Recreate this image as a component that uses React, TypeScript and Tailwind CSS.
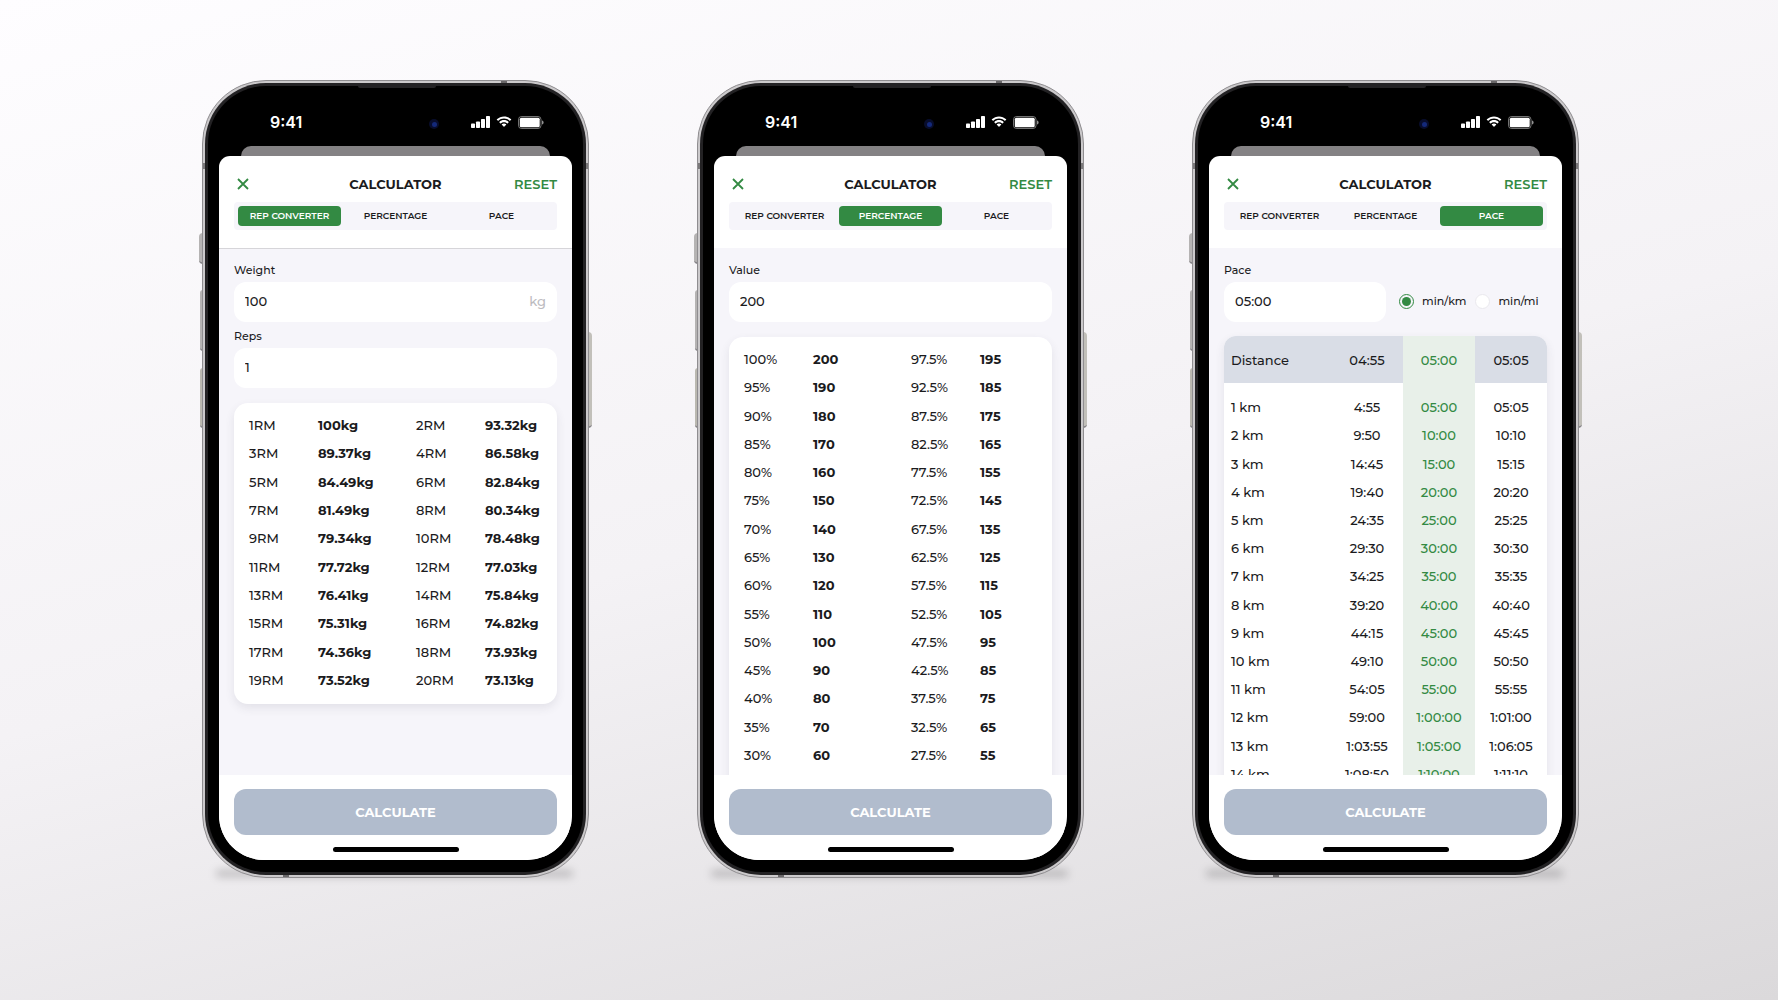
import { useId } from "react"
import type { ReactNode } from "react"

const repMaxes = [
  ["1RM", "100kg", "2RM", "93.32kg"],
  ["3RM", "89.37kg", "4RM", "86.58kg"],
  ["5RM", "84.49kg", "6RM", "82.84kg"],
  ["7RM", "81.49kg", "8RM", "80.34kg"],
  ["9RM", "79.34kg", "10RM", "78.48kg"],
  ["11RM", "77.72kg", "12RM", "77.03kg"],
  ["13RM", "76.41kg", "14RM", "75.84kg"],
  ["15RM", "75.31kg", "16RM", "74.82kg"],
  ["17RM", "74.36kg", "18RM", "73.93kg"],
  ["19RM", "73.52kg", "20RM", "73.13kg"],
]

const percentages = Array.from({ length: 15 }, (_, i) => {
  const left = 100 - i * 5
  const right = left - 2.5
  return [`${left}%`, `${left * 2}`, `${right}%`, `${right * 2}`]
})

const distances = Array.from({ length: 14 }, (_, i) => i + 1)

// 3835 -> 1:03:55
const formatTime = (total: number) => {
  const h = Math.floor(total / 3600)
  const m = Math.floor((total % 3600) / 60)
  const s = String(total % 60).padStart(2, "0")
  return h > 0 ? `${h}:${String(m).padStart(2, "0")}:${s}` : `${m}:${s}`
}

const tabs = ["REP CONVERTER", "PERCENTAGE", "PACE"]

const StatusBar = () => (
  <div className="relative flex h-[60px] shrink-0 items-center justify-between pr-[28px] pl-[51px] pt-[12px] text-white">
    <span className="font-[Inter,sans-serif] text-base leading-5 font-semibold">9:41</span>
    <div className="absolute top-[33px] left-[210px] flex size-[10px] items-center justify-center rounded-full bg-[#080d2c]">
      <div className="size-[5px] rounded-full bg-[#14297a]" />
    </div>
    <div className="flex items-center gap-[6px]">
      <svg width="19" height="12" viewBox="0 0 19 12" fill="currentColor">
        <rect x="0" y="7.500" width="4" height="4.500" rx="0.800" />
        <rect x="5" y="5.500" width="4" height="6.500" rx="0.800" />
        <rect x="10" y="3" width="4" height="9" rx="0.800" />
        <rect x="15" y="0" width="4" height="12" rx="0.800" />
      </svg>
      <svg width="16" height="12" viewBox="0 0 17 12" fill="currentColor">
        <path d="M8.5 2.4c2.3 0 4.4.9 6 2.4.1.1.3.1.4 0l1.2-1.2c.1-.1.1-.3 0-.4C12-.9 5-.9.9 3.2c-.1.1-.1.3 0 .4l1.2 1.2c.1.1.3.1.4 0 1.6-1.5 3.7-2.4 6-2.4z" />
        <path d="M8.5 6.2c1.300 0 2.500.5 3.400 1.300.1.1.3.1.4 0l1.200-1.200c.1-.1.1-.3 0-.4-2.800-2.600-7.200-2.600-10 0-.1.1-.1.3 0 .4l1.200 1.200c.1.1.3.1.4 0 .9-.8 2.100-1.300 3.400-1.300z" />
        <path d="M10.800 8.900c.1-.1.1-.3 0-.4-1.300-1.100-3.300-1.100-4.600 0-.1.1-.1.3 0 .4l2.100 2.100c.1.1.3.1.4 0z" />
      </svg>
      <svg width="26" height="13" viewBox="0 0 26 13" fill="none">
        <rect x="0.500" y="0.500" width="22.500" height="12" rx="3" stroke="#fff" strokeOpacity="0.450" />
        <rect x="1.800" y="1.800" width="19.900" height="9.400" rx="1.500" fill="#fff" />
        <path d="M24.200 4.500v4c.8-.3 1.300-1.100 1.300-2s-.5-1.700-1.300-2z" fill="#fff" fillOpacity="0.700" />
      </svg>
    </div>
  </div>
)

interface PhoneProps {
  active: string
  divider?: boolean
  children: ReactNode
}

const Phone: React.FC<PhoneProps> = ({ active, divider, children }) => {
  return (
    <div className="relative h-[798px] w-[387px] shrink-0">
      {/* ground shadow */}
      <div className="absolute right-[16px] bottom-[1px] left-[14px] h-[7px] rounded-full bg-black/20 blur-[4px]" />

      {/* side keys */}
      <div className="absolute top-[153px] left-[-3px] h-[31px] w-[4px] rounded-l-sm border-b-2 border-[#88868a] bg-[#b5b3b3]" />
      <div className="absolute top-[210px] left-[-2px] h-[61px] w-[3px] rounded-l-sm border-b-2 border-[#88868a] bg-[#b5b3b3]" />
      <div className="absolute top-[288px] left-[-2px] h-[60px] w-[3px] rounded-l-sm border-b-2 border-[#88868a] bg-[#bab8b0]" />
      <div className="absolute top-[252px] right-[-3px] h-[96px] w-[4px] rounded-r-sm border-b-2 border-[#88868a] bg-[#c2c0ba]" />

      <div className="relative h-full overflow-hidden rounded-[64px] border border-[#8f8d90] bg-[#cbc9cb] p-[2px]">
        {/* antenna bands */}
        <div className="absolute top-[82px] right-0 left-0 h-[6px] bg-[#7b797b]" />
        <div className="absolute top-0 left-[298px] h-[3px] w-[6px] bg-[#6a686a]" />
        <div className="absolute bottom-0 left-[80px] h-[4px] w-[6px] bg-[#6a686a]" />

        <div className="relative h-full overflow-hidden rounded-[61px] bg-[#232224] p-[3px]">
          <div className="relative flex h-full flex-col overflow-hidden rounded-[58px] bg-black px-[11px] pb-[12px]">
            <div className="absolute top-0 left-[150px] h-[2px] w-[78px] rounded-b-sm bg-[#232224]" />
            <StatusBar />
            <div className="mx-[22px] h-[10px] shrink-0 rounded-t-[10px] bg-[#848284]" />
            <div className="flex min-h-0 flex-1 flex-col overflow-hidden rounded-t-[11px] rounded-b-[45px] bg-white">
              <header
                className={
                  divider
                    ? "h-[93px] shrink-0 border-b border-[#d6d5d9] px-[15px] pt-[18px]"
                    : "h-[93px] shrink-0 border-b border-[#f6f5fa] px-[15px] pt-[18px]"
                }
              >
                <div className="grid h-5 grid-cols-3 items-center text-[13px] leading-5">
                  <button aria-label="Close" className="ml-[3px] w-[12px] text-[#338a43]">
                    <svg width="12" height="12" viewBox="0 0 12 12" stroke="currentColor" strokeWidth="1.8">
                      <path d="M1 1l10 10M11 1L1 11" />
                    </svg>
                  </button>
                  <h1 className="text-center font-bold text-[#1b1b1d]">CALCULATOR</h1>
                  <button className="justify-self-end font-semibold text-[#338a43]">RESET</button>
                </div>
                <nav className="mt-2 grid h-7 grid-cols-3 gap-[3px] rounded-[4px] bg-[#f6f5fa] p-[4px] text-[9px] leading-5 font-semibold">
                  {tabs.map((tab) => (
                    <button
                      key={tab}
                      className={
                        tab === active
                          ? "rounded-[4px] bg-[#338a43] text-white"
                          : "rounded-[4px] text-[#1b1b1d]"
                      }
                    >
                      {tab}
                    </button>
                  ))}
                </nav>
              </header>

              <main className="min-h-0 flex-1 overflow-hidden bg-[#f6f5fa] px-[15px] pt-[11px] font-medium text-[#1b1b1d]">
                {children}
              </main>

              <footer className="flex h-[85px] shrink-0 flex-col items-center bg-white px-[15px] pt-[14px]">
                <button className="h-[46px] w-full rounded-[12px] bg-[#b1bccd] pt-px text-[13px] font-bold text-white">
                  CALCULATE
                </button>
                <div className="mt-[12px] h-[5px] w-[126px] rounded-full bg-black" />
              </footer>
            </div>
          </div>
        </div>
      </div>
    </div>
  )
}

interface FieldProps {
  label: string
  value: string
  unit?: string
}

const Field: React.FC<FieldProps> = ({ label, value, unit }) => {
  const id = useId()
  return (
    <div className="mb-[4px]">
      <label htmlFor={id} className="mb-[2px] block text-[11px] leading-5">
        {label}
      </label>
      <div className="flex h-10 items-center rounded-[12px] bg-white px-[11px] text-[13px]">
        <input id={id} defaultValue={value} className="min-w-0 flex-1 bg-transparent outline-none" />
        {unit && <span className="text-[#bcbbc0]">{unit}</span>}
      </div>
    </div>
  )
}

interface ValueTableProps {
  rows: string[][]
}

const ValueTable: React.FC<ValueTableProps> = ({ rows }) => (
  <table className="h-full w-full table-fixed text-[13px] leading-5">
    <colgroup>
      <col className="w-[69px]" />
      <col className="w-[98px]" />
      <col className="w-[69px]" />
      <col />
    </colgroup>
    <tbody>
      {rows.map(([a, b, c, d]) => (
        <tr key={a}>
          <td>{a}</td>
          <td className="font-bold">{b}</td>
          <td>{c}</td>
          <td className="font-bold">{d}</td>
        </tr>
      ))}
    </tbody>
  </table>
)

const RepConverter = () => (
  <Phone active="REP CONVERTER" divider>
    <Field label="Weight" value="100" unit="kg" />
    <Field label="Reps" value="1" />
    <div className="mt-[15px] h-[301px] rounded-[14px] bg-white pt-[8px] pb-[10px] pl-[15px] shadow-[0_4px_10px_rgba(60,60,80,0.1)]">
      <ValueTable rows={repMaxes} />
    </div>
  </Phone>
)

const Percentage = () => (
  <Phone active="PERCENTAGE">
    <Field label="Value" value="200" />
    <div className="mt-[15px] h-[472px] rounded-[14px] bg-white pt-[8px] pb-[40px] pl-[15px] shadow-[0_4px_10px_rgba(60,60,80,0.1)]">
      <ValueTable rows={percentages} />
    </div>
  </Phone>
)

const Pace = () => (
  <Phone active="PACE">
    <div className="flex items-end">
      <div className="w-[162px]">
        <Field label="Pace" value="05:00" />
      </div>
      <div className="mb-[15px] ml-[13px] flex text-[11px] leading-5">
        <label className="flex items-center gap-2">
          <input
            type="radio"
            name="unit"
            defaultChecked
            className="size-[15px] appearance-none rounded-full border border-[#eae9ee] bg-white checked:border-[#338a43] checked:bg-[#338a43] checked:bg-clip-content checked:p-[2px]"
          />
          min/km
        </label>
        <label className="ml-[9px] flex items-center gap-2">
          <input
            type="radio"
            name="unit"
            className="size-[15px] appearance-none rounded-full border border-[#eae9ee] bg-white checked:border-[#338a43] checked:bg-[#338a43] checked:bg-clip-content checked:p-[2px]"
          />
          min/mi
        </label>
      </div>
    </div>
    <div className="mt-[10px] overflow-hidden rounded-[12px] bg-white shadow-[0_4px_10px_rgba(60,60,80,0.1)]">
      <table className="h-[452px] w-full table-fixed text-center text-[13px] leading-5">
        <colgroup>
          <col />
          <col className="w-[72px]" />
          <col className="w-[72px]" />
          <col className="w-[72px]" />
        </colgroup>
        <thead>
          <tr className="h-[47px] bg-[#d9dde6]">
            <th className="pl-[7px] text-left font-medium">Distance</th>
            <th className="font-medium">04:55</th>
            <th className="bg-[#e8f0e9] font-medium text-[#338a43]">05:00</th>
            <th className="font-medium">05:05</th>
          </tr>
          <tr className="h-[10px]">
            <td colSpan={2} />
            <td className="bg-[#e8f0e9]" />
            <td />
          </tr>
        </thead>
        <tbody>
          {distances.map((km) => (
            <tr key={km}>
              <td className="pl-[7px] text-left">{km} km</td>
              <td>{formatTime(km * 295)}</td>
              <td className="bg-[#e8f0e9] text-[#338a43]">
                {km === 1 ? "05:00" : formatTime(km * 300)}
              </td>
              <td>{km === 1 ? "05:05" : formatTime(km * 305)}</td>
            </tr>
          ))}
        </tbody>
      </table>
    </div>
  </Phone>
)

const App = () => {
  return (
    <div className="flex min-h-screen items-start justify-center gap-[108px] bg-linear-165 from-[#fefdff] via-[#f4f2f5] to-[#dbd9db] pt-[80px] pl-[3px] font-[Montserrat,Inter,sans-serif]">
      <RepConverter />
      <Percentage />
      <Pace />
    </div>
  )
}

export default App
